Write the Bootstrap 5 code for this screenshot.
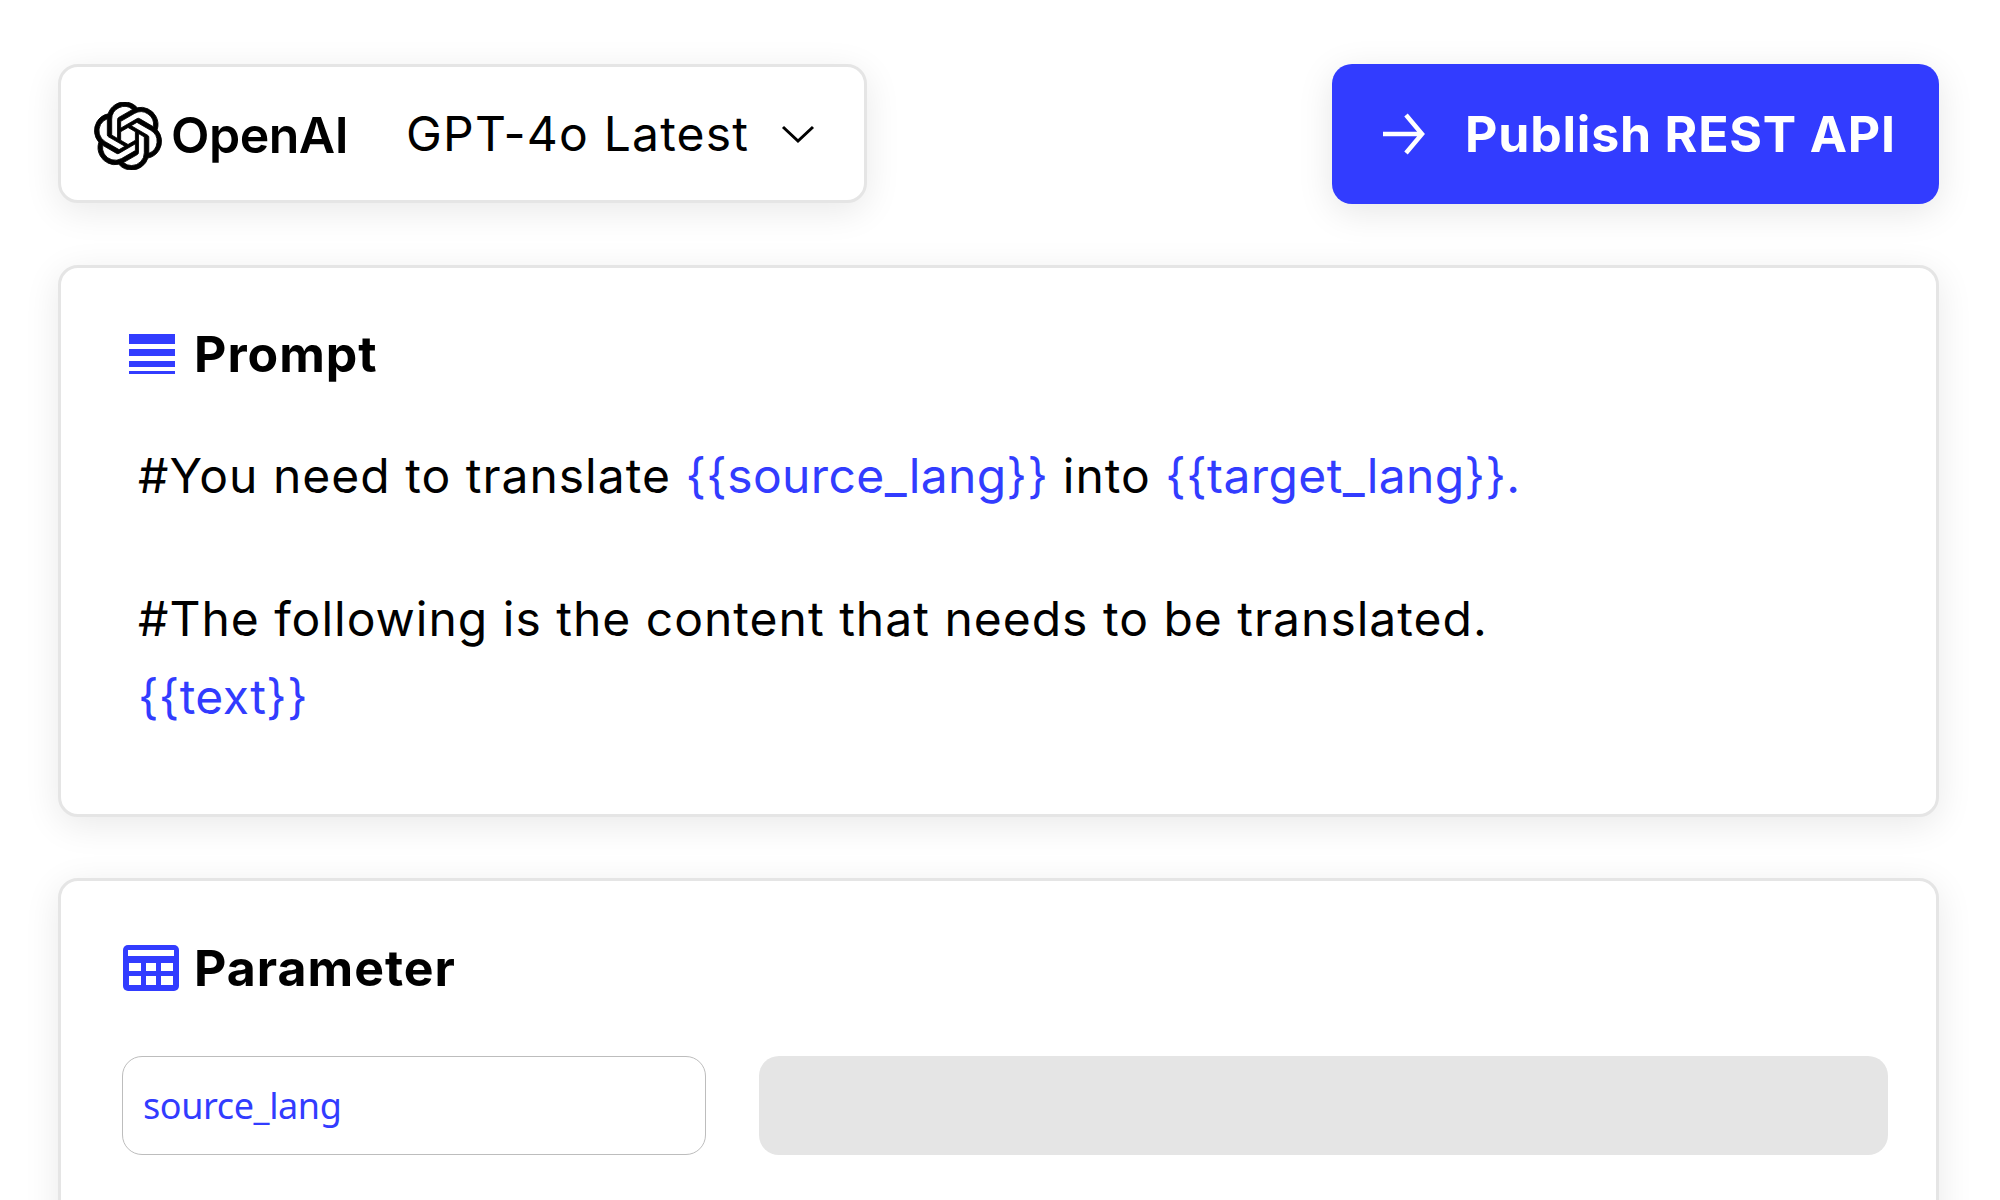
<!DOCTYPE html>
<html lang="en">
<head>
<meta charset="utf-8">
<title>Publish REST API</title>
<link href="https://cdn.jsdelivr.net/npm/bootstrap@5.3.0/dist/css/bootstrap.min.css" rel="stylesheet">
<style>
html, body { height: 1200px; overflow: hidden; background: #fff; }
body { font-family: Inter, "Liberation Sans", sans-serif; color: #000; }
.stage { padding: 64px 61px 0 58px; gap: 61px; height: 1200px; overflow: hidden; }
.panel { background: #fff; border: 3px solid #e5e5e5; border-radius: 20px; box-shadow: 0 8px 36px rgba(0,0,0,.09); flex-shrink: 0; }
.model-box { width: 809px; height: 139px; padding-left: 33px; }
.logo-mark { margin-top: 5px; }
.brand { font-size: 50px; font-weight: 600; letter-spacing: -.5px; margin-left: 9px; margin-top: 2px; line-height: 1; }
.model-name { font-size: 48px; font-weight: 400; letter-spacing: 1.2px; margin-left: 58px; line-height: 1; }
.chev { margin-left: 32px; }
.publish { width: 607px; height: 140px; background: #323cff; color: #fff; border: 0; border-radius: 20px; box-shadow: 0 8px 36px rgba(0,0,0,.1); font-size: 50px; font-weight: 700; letter-spacing: .8px; padding: 0 30px 0 50px; white-space: nowrap; }
.publish:hover { background: #323cff; color: #fff; }
.publish-label { margin-left: 39px; }
.prompt-box { height: 552px; padding: 61px 50px 0 68px; }
.param-box { height: 500px; padding: 62px 48px 0 62px; }
.box-title { font-size: 50px; font-weight: 700; letter-spacing: 1px; line-height: 1; margin: 0; }
.title-icon { margin-right: 19px; }
.wide-icon { margin-right: 15px; }
.prompt-body { font-size: 48px; line-height: 78px; letter-spacing: 1px; margin-top: 58px; padding-left: 9px; }
.prompt-body p { margin: 0 0 65px; }
.var { color: #323cff; letter-spacing: .4px; }
.param-row { gap: 53px; margin-top: 63px; margin-left: -1px; }
.param-name { width: 584px; height: 99px; border: 1px solid #bdbdbd; border-radius: 20px; color: #323cff; font-family: "Noto Sans", sans-serif; font-size: 36px; letter-spacing: -.4px; padding-left: 20px; }
.param-value { height: 99px; background: #e5e5e5; border-radius: 20px; }
</style>
</head>
<body>
<div class="stage d-flex flex-column">
  <div class="d-flex justify-content-between align-items-start flex-shrink-0">
    <div class="panel model-box d-flex align-items-center">
      <svg class="logo-mark" width="68" height="68" viewBox="0 0 24 24" fill="#000" stroke="#000" stroke-width=".3" aria-hidden="true"><path d="M22.2819 9.8211a5.9847 5.9847 0 0 0-.5157-4.9108 6.0462 6.0462 0 0 0-6.5098-2.9A6.0651 6.0651 0 0 0 4.9807 4.1818a5.9847 5.9847 0 0 0-3.9977 2.9 6.0462 6.0462 0 0 0 .7427 7.0966 5.98 5.98 0 0 0 .511 4.9107 6.051 6.051 0 0 0 6.5146 2.9001A5.9847 5.9847 0 0 0 13.2599 24a6.0557 6.0557 0 0 0 5.7718-4.2058 5.9894 5.9894 0 0 0 3.9977-2.9001 6.0557 6.0557 0 0 0-.7475-7.0729zm-9.022 12.6081a4.4755 4.4755 0 0 1-2.8764-1.0408l.1419-.0804 4.7783-2.7582a.7948.7948 0 0 0 .3927-.6813v-6.7369l2.02 1.1686a.071.071 0 0 1 .038.052v5.5826a4.504 4.504 0 0 1-4.4945 4.4944zm-9.6607-4.1254a4.4708 4.4708 0 0 1-.5346-3.0137l.142.0852 4.783 2.7582a.7712.7712 0 0 0 .7806 0l5.8428-3.3685v2.3324a.0804.0804 0 0 1-.0332.0615L9.74 19.9502a4.4992 4.4992 0 0 1-6.1408-1.6464zM2.3408 7.8956a4.485 4.485 0 0 1 2.3655-1.9728V11.6a.7664.7664 0 0 0 .3879.6765l5.8144 3.3543-2.0201 1.1685a.0757.0757 0 0 1-.071 0l-4.8303-2.7865A4.504 4.504 0 0 1 2.3408 7.872zm16.5963 3.8558L13.1038 8.364 15.1192 7.2a.0757.0757 0 0 1 .071 0l4.8303 2.7913a4.4944 4.4944 0 0 1-.6765 8.1042v-5.6772a.79.79 0 0 0-.407-.667zm2.0107-3.0231l-.142-.0852-4.7735-2.7818a.7759.7759 0 0 0-.7854 0L9.409 9.2297V6.8974a.0662.0662 0 0 1 .0284-.0615l4.8303-2.7866a4.4992 4.4992 0 0 1 6.6802 4.66zM8.3065 12.863l-2.02-1.1638a.0804.0804 0 0 1-.038-.0567V6.0742a4.4992 4.4992 0 0 1 7.3757-3.4537l-.142.0805L8.704 5.459a.7948.7948 0 0 0-.3927.6813zm1.0976-2.3654l2.602-1.4998 2.6069 1.4998v2.9994l-2.5974 1.4997-2.6067-1.4997Z"/></svg>
      <span class="brand">OpenAI</span>
      <span class="model-name">GPT-4o Latest</span>
      <svg class="chev" width="34" height="20" viewBox="0 0 34 20" fill="none" stroke="#000" stroke-width="3" aria-hidden="true"><path d="M2 3l15 14L32 3"/></svg>
    </div>
    <button type="button" class="btn publish d-flex align-items-center">
      <svg width="44" height="44" viewBox="0 0 44 44" fill="none" stroke="#fff" stroke-width="4.5" aria-hidden="true"><path d="M1 22h39M24 3l16 19-16 19"/></svg>
      <span class="publish-label">Publish REST API</span>
    </button>
  </div>

  <section class="panel prompt-box">
    <h2 class="box-title d-flex align-items-center">
      <svg class="title-icon" width="46" height="40" viewBox="0 0 46 40" fill="#323cff" aria-hidden="true"><rect width="46" height="10"/><rect y="15" width="46" height="7"/><rect y="27" width="46" height="6"/><rect y="37" width="46" height="3"/></svg>
      Prompt
    </h2>
    <div class="prompt-body">
      <p>#You need to translate <span class="var">{{source_lang}}</span> into <span class="var">{{target_lang}}.</span></p>
      <div>#The following is the content that needs to be translated.</div>
      <div class="var">{{text}}</div>
    </div>
  </section>

  <section class="panel param-box">
    <h2 class="box-title d-flex align-items-center">
      <svg class="title-icon wide-icon" width="56" height="46" viewBox="0 0 56 46" aria-hidden="true"><rect width="56" height="46" rx="5" fill="#323cff"/><g fill="#fff"><rect x="5" y="5" width="46" height="6"/><rect x="6" y="18" width="12" height="8"/><rect x="23" y="18" width="10" height="8"/><rect x="38" y="18" width="12" height="8"/><rect x="6" y="31" width="12" height="9"/><rect x="23" y="31" width="10" height="9"/><rect x="38" y="31" width="12" height="9"/></g></svg>
      Parameter
    </h2>
    <div class="param-row d-flex">
      <div class="param-name d-flex align-items-center flex-shrink-0">source_lang</div>
      <div class="param-value flex-grow-1"></div>
    </div>
  </section>
</div>
<script src="https://cdn.jsdelivr.net/npm/bootstrap@5.3.0/dist/js/bootstrap.bundle.min.js"></script>
</body>
</html>
